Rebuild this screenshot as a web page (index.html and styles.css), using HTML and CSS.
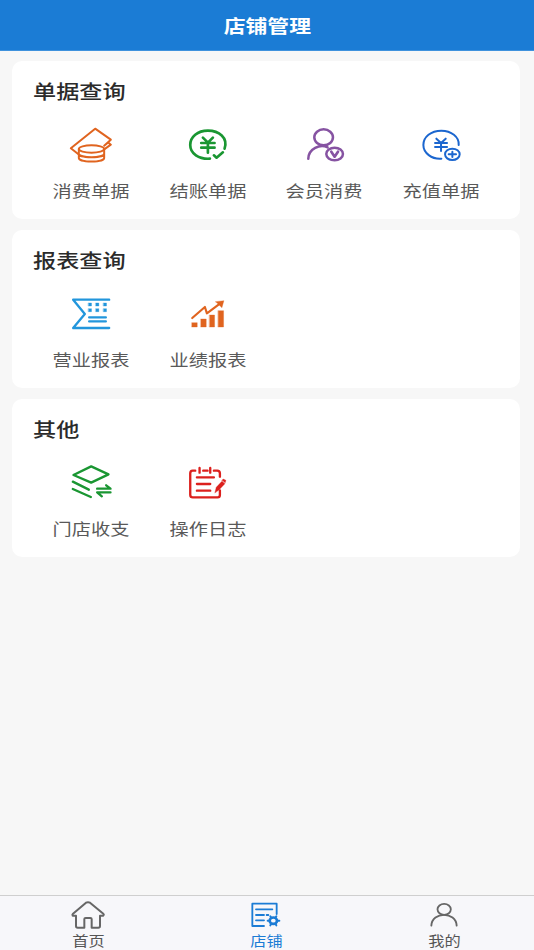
FILE: index.html
```html
<!DOCTYPE html>
<html lang="zh-CN">
<head>
<meta charset="utf-8">
<title>店铺管理</title>
<link rel="stylesheet" href="styles.css">
</head>
<body>
<header class="header"><h1 class="wide">店铺管理</h1></header>
<main class="content">
  <section class="card">
    <h2 class="wide">单据查询</h2>
    <div class="grid">
      <a class="item orange">
        <svg viewBox="52.5 18 144 144" stroke-width="6"><path d="M86 117 64 100 137 41 184 74 164 92M164 103 184 89 177 83M164 92 174 84"/><ellipse cx="126" cy="102" rx="38" ry="11"/><path d="M88 102V129C88 143 164 143 164 129V102M88 116C88 130 164 130 164 116"/></svg>
        <span class="wide">消费单据</span>
      </a>
      <a class="item green">
        <svg viewBox="57.3 18 144 144" stroke-width="8"><path d="M179 101C190 68 162 47 129 47 98 47 76 66 76 90 76 116 102 133 135 131M147 121 155 128 174 112"/><path d="M114 68 129 83 144 68M129 83V113M109 84H149M109 98H149"/></svg>
        <span class="wide">结账单据</span>
      </a>
      <a class="item purple">
        <svg viewBox="62.1 18 144 144" stroke-width="7.5"><ellipse cx="133" cy="67" rx="28" ry="24"/><path d="M87 131C88 101 122 86 145 97"/><ellipse cx="166" cy="117" rx="25" ry="19"/><path d="M156 110 166 125 176 110" stroke-width="8"/></svg>
        <span class="wide">会员消费</span>
      </a>
      <a class="item blue">
        <svg viewBox="57.9 18 144 144" stroke-width="6"><path d="M183 90C185 65 160 47 131 47 100 47 77 65 77 90 77 114 102 133 131 131"/><path d="M116 71 130 84 144 71M130 84V108M112 84H148M112 96H148"/><ellipse cx="164" cy="118" rx="22" ry="17"/><path d="M153 118H175M164 110V126"/></svg>
        <span class="wide">充值单据</span>
      </a>
    </div>
  </section>
  <section class="card">
    <h2 class="wide">报表查询</h2>
    <div class="grid">
      <a class="item sky">
        <svg viewBox="52.5 15 144 144" stroke-width="7"><path d="M179 44H71L106 87 71 129H179M119 97H169M119 109H169"/><path class="solid" d="M117 54h9v9h-9zM139 54h9v9h-9zM162 54h9v9h-9zM117 71h9v9h-9zM139 71h9v9h-9zM162 71h9v9h-9z"/></svg>
        <span class="wide">营业报表</span>
      </a>
      <a class="item orange">
        <svg viewBox="57.3 15 144 144" stroke-width="6.5"><path d="M82 99 120 66 126 85 165 56"/><path class="solid" d="M152 50 177 47 171 68 165 62 159 56zM81 113h16v13H81zM108 102h16v24h-16zM134 90h15v36h-15zM160 77h16v49h-16z"/></svg>
        <span class="wide">业绩报表</span>
      </a>
    </div>
  </section>
  <section class="card">
    <h2 class="wide">其他</h2>
    <div class="grid">
      <a class="item green">
        <svg viewBox="52.5 12 144 144" stroke-width="7"><path d="M72 60 125 34 177 58 125 83ZM70 80 118 104M70 102 124 126M143 101H183L170 91M183 112H143L157 124"/></svg>
        <span class="wide">门店收支</span>
      </a>
      <a class="item red">
        <svg viewBox="57.3 12 144 144" stroke-width="7"><path d="M91 47H83Q76 47 76 55V119Q76 127 84 127H158Q165 127 165 119V106M115 47H128M147 47H157Q165 47 165 55V65M104 39V53M136 39V53M96 67H147M96 87H136M96 107H136"/><path class="solid" d="M150 113 154 97 171 79 180 86 162 105zM171 76 175 72 183 76 181 83z"/></svg>
        <span class="wide">操作日志</span>
      </a>
    </div>
  </section>
</main>
<nav class="tabs">
  <a class="tab">
    <svg viewBox="60 45 108 90" stroke-width="6"><path d="M78 92H68Q66 89 69 86L108 53Q114 50 120 53L160 86Q163 89 160 92H150V123Q150 128 145 128H125V102Q125 99 121 99H107Q103 99 103 102V128H83Q78 128 78 123Z"/></svg>
    <span class="wide">首页</span>
  </a>
  <a class="tab active">
    <svg viewBox="594 45 108 90" stroke-width="5.5"><path d="M680 87V56H607V123H642M618 73H667M618 90H642M650 90H655M618 106H642"/><ellipse cx="670" cy="107" rx="11" ry="9.5" stroke-width="8"/><path d="M653 107H658M682 107H688M661 94 664 99M679 94 676 99M661 121 664 116M679 121 676 116" stroke-width="6"/></svg>
    <span class="wide">店铺</span>
  </a>
  <a class="tab">
    <svg viewBox="78 45 108 90" stroke-width="5.5"><ellipse cx="132.500" cy="73" rx="20" ry="16.500"/><path d="M94 122C96 79 168 79 170 122"/></svg>
    <span class="wide">我的</span>
  </a>
</nav>
</body>
</html>
```
FILE: styles.css
```css
* { box-sizing: border-box; }
body {
  margin: 0;
  height: 950px;
  display: flex;
  flex-direction: column;
  overflow: hidden;
  background: #f7f7f7;
  font-family: "Noto Sans CJK SC", sans-serif;
}
h1, h2 { margin: 0; }
.wide { display: block; transform: scaleX(1.2); white-space: nowrap; }
.header {
  height: 51px;
  flex: none;
  display: flex;
  justify-content: center;
  background: #1b7cd5;
  border-bottom: 1px solid #3f92dd;
  color: #fff;
}
.header h1 { font-size: 18.2px; line-height: 50px; font-weight: 700; }
.content {
  flex: 1;
  display: flex;
  flex-direction: column;
  gap: 11px;
  padding: 10px 14px 0 12px;
}
.card {
  height: 158px;
  padding: 15px 21px 0;
  background: #fff;
  border-radius: 10px;
}
.card h2 {
  width: max-content;
  font-size: 19.3px;
  line-height: 30px;
  font-weight: 500;
  color: #2b2b2b;
  transform-origin: left;
}
.grid {
  display: grid;
  grid-template-columns: repeat(4, 1fr);
  padding-top: 15px;
}
.item { display: flex; flex-direction: column; align-items: center; }
.item svg { width: 48px; height: 48px; }
.item span { font-size: 16px; line-height: 24px; margin-top: 9px; color: #595959; }
svg {
  display: block;
  fill: none;
  stroke: currentColor;
  stroke-linecap: round;
  stroke-linejoin: round;
}
.solid { fill: currentColor; stroke-width: 1; }
.orange { color: #e0641f; }
.green { color: #1a9632; }
.purple { color: #8653a2; }
.blue { color: #1b66cf; }
.sky { color: #2296dc; }
.red { color: #dc201d; }
.tabs {
  height: 55px;
  flex: none;
  display: grid;
  grid-template-columns: 176px 180px 176px;
  padding: 4px 0 0;
  background: #f7f7fa;
  border-top: 1px solid #cfcfcf;
}
.tab { display: flex; flex-direction: column; align-items: center; color: #666; }
.tab svg { width: 36px; height: 30px; }
.tab span { font-size: 13.5px; line-height: 20px; color: #555; }
.active, .active span { color: #1b7cd5; }
```
